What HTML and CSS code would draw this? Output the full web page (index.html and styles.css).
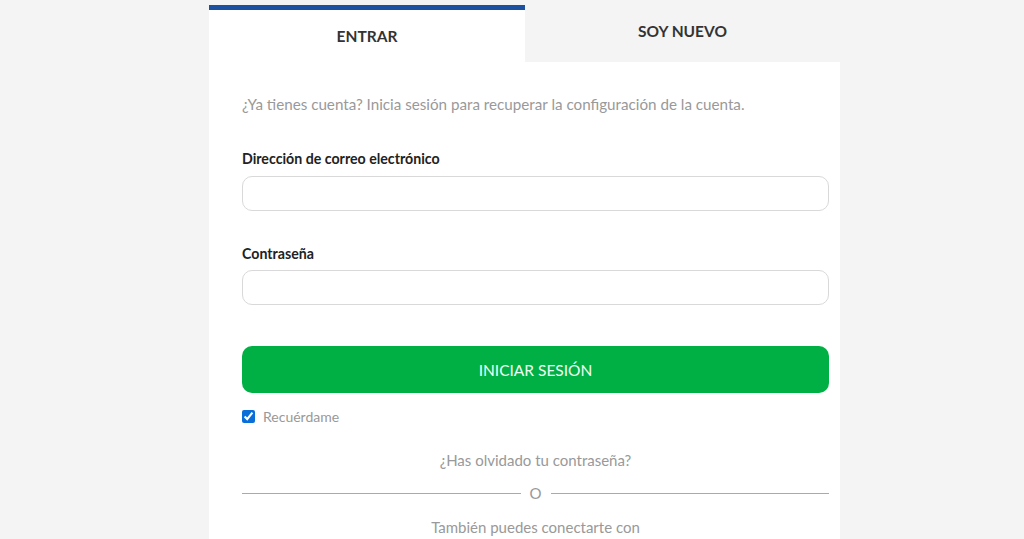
FILE: index.html
```html
<!DOCTYPE html>
<html lang="es">
<head>
<meta charset="utf-8">
<title>Entrar</title>
<link rel="stylesheet" href="styles.css">
</head>
<body>
<div class="page">
  <div class="card">
    <div class="tabs">
      <div class="tab tab-active">ENTRAR</div>
      <div class="tab tab-inactive">SOY NUEVO</div>
    </div>
    <div class="content">
      <p class="intro">¿Ya tienes cuenta? Inicia sesión para recuperar la configuración de la cuenta.</p>
      <label class="label" for="email">Dirección de correo electrónico</label>
      <input class="field" id="email" type="email">
      <label class="label label-pass" for="pass">Contraseña</label>
      <input class="field field-pass" id="pass" type="password">
      <button class="submit" type="button">INICIAR SESIÓN</button>
      <label class="remember"><input type="checkbox" checked> <span>Recuérdame</span></label>
      <p class="forgot">¿Has olvidado tu contraseña?</p>
      <div class="divider"><span class="line"></span><span class="or">O</span><span class="line"></span></div>
      <p class="also">También puedes conectarte con</p>
    </div>
  </div>
</div>
</body>
</html>
```

FILE: styles.css
```css
html, body {
  margin: 0;
  padding: 0;
  background: #f4f4f4;
  font-family: "Lato", "Open Sans", sans-serif;
  height: 539px;
  overflow: hidden;
}
.page {
  padding-left: 209px;
}
.card {
  width: 631px;
}
.tabs {
  display: flex;
  align-items: flex-start;
  height: 62px;
}
.tab {
  flex: 0 0 auto;
  display: flex;
  align-items: center;
  justify-content: center;
  font-weight: 700;
  font-size: 15.5px;
  color: #333;
  box-sizing: border-box;
}
.tab-active {
  width: 316px;
  margin-top: 5px;
  height: 57px;
  background: #fff;
  border-top: 5px solid #1c50a0;
}
.tab-inactive {
  width: 315px;
  height: 62px;
  background: #f4f4f4;
}
.content {
  background: #fff;
  padding: 32px 11px 20px 33px;
  display: flex;
  flex-direction: column;
  min-height: 500px;
}
.intro {
  margin: 0;
  font-size: 15.2px;
  line-height: 20px;
  color: #999;
}
.label {
  margin-top: 36px;
  font-size: 14.2px;
  font-weight: 700;
  line-height: 18px;
  color: #222;
}
.label-pass {
  margin-top: 34px;
}
.field {
  margin: 8px 0 0;
  height: 35px;
  box-sizing: border-box;
  border: 1px solid #d9d9d9;
  border-radius: 10px;
  background: #fff;
  outline: none;
}
.field-pass {
  margin-top: 7px;
}
.submit {
  margin-top: 41px;
  height: 47px;
  border: none;
  border-radius: 10px;
  background: #00b045;
  color: #eefff3;
  font-family: inherit;
  font-size: 15.5px;
  font-weight: 400;
}
.remember {
  display: flex;
  align-items: center;
  gap: 8px;
  margin-top: 13px;
  height: 20px;
  font-size: 14px;
  color: #999;
}
.remember input {
  margin: 0;
  width: 13px;
  height: 13px;
  accent-color: #0a6ed8;
}
.forgot {
  margin: 24px 0 0;
  text-align: center;
  font-size: 15px;
  line-height: 20px;
  color: #999;
}
.divider {
  display: flex;
  align-items: center;
  gap: 9px;
  margin-top: 13px;
  height: 20px;
}
.line {
  flex: 1;
  height: 1px;
  background: #aaa;
}
.or {
  font-size: 15px;
  color: #999;
}
.also {
  margin: 14px 0 0;
  text-align: center;
  font-size: 15px;
  line-height: 20px;
  color: #999;
}
```
